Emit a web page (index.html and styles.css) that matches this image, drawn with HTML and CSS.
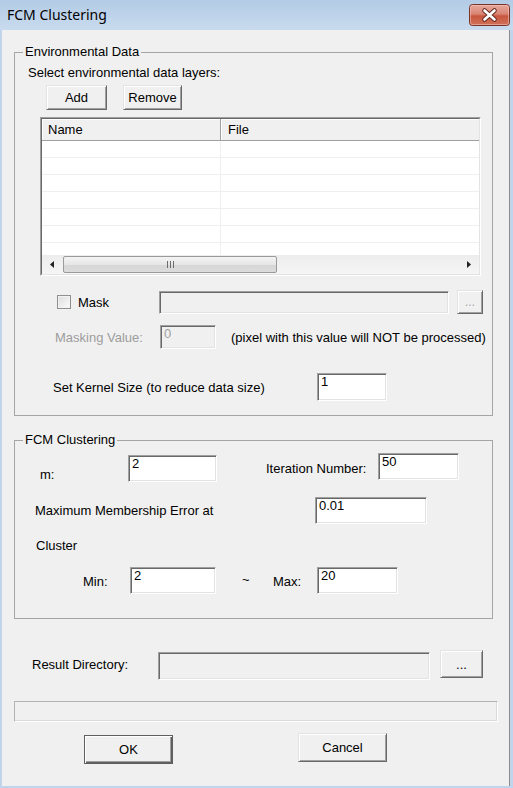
FILE: index.html
```html
<!DOCTYPE html>
<html>
<head>
<meta charset="utf-8">
<title>FCM Clustering</title>
<link rel="stylesheet" href="styles.css">
</head>
<body>
<div class="window">
  <div class="titlebar">
    <span class="title">FCM Clustering</span>
    <span class="close">
      <svg width="41" height="22" viewBox="0 0 41 22">
        <defs>
          <linearGradient id="cg" x1="0" y1="0" x2="0" y2="1">
            <stop offset="0" stop-color="#e8aa9e"/>
            <stop offset="0.45" stop-color="#d98574"/>
            <stop offset="0.55" stop-color="#c8563f"/>
            <stop offset="1" stop-color="#d0735a"/>
          </linearGradient>
        </defs>
        <rect x="0.5" y="0.5" width="40" height="21" rx="3" fill="url(#cg)" stroke="#7b3329"/>
        <rect x="1.5" y="1.5" width="38" height="19" rx="2" fill="none" stroke="#f3c6bc" stroke-opacity="0.55"/>
        <path d="M15.5 6.5 L25.5 15.5 M25.5 6.5 L15.5 15.5" stroke="#6a2a22" stroke-width="4.6" stroke-linecap="round"/>
        <path d="M15.5 6.5 L25.5 15.5 M25.5 6.5 L15.5 15.5" stroke="#ffffff" stroke-width="2.6" stroke-linecap="round"/>
      </svg>
    </span>
  </div>
  <div class="frame">
    <div class="client">

      <fieldset class="group g1">
        <legend>Environmental Data</legend>
        <div class="select">Select environmental data layers:</div>
        <div class="btnrow">
          <button class="btn add">Add</button>
          <button class="btn remove">Remove</button>
        </div>
        <div class="list">
          <div class="list-in">
            <div class="lv-head">
              <div class="hcell c1">Name</div>
              <div class="hcell c2">File</div>
            </div>
            <div class="lv-body">
              <div class="lv-row"><span class="cell1"></span><span class="cell2"></span></div>
              <div class="lv-row"><span class="cell1"></span><span class="cell2"></span></div>
              <div class="lv-row"><span class="cell1"></span><span class="cell2"></span></div>
              <div class="lv-row"><span class="cell1"></span><span class="cell2"></span></div>
              <div class="lv-row"><span class="cell1"></span><span class="cell2"></span></div>
              <div class="lv-row"><span class="cell1"></span><span class="cell2"></span></div>
              <div class="lv-row"><span class="cell1"></span><span class="cell2"></span></div>
            </div>
            <div class="hscroll">
              <div class="sb-arrow">
                <svg width="4" height="7" viewBox="0 0 4 7"><path d="M4 0 L0 3.5 L4 7 Z" fill="#222"/></svg>
              </div>
              <div class="thumb">
                <svg width="7" height="7" viewBox="0 0 7 7"><path d="M0.5 0 V7 M3.5 0 V7 M6.5 0 V7" stroke="#6b6b6b" stroke-width="1"/></svg>
              </div>
              <div class="sb-track"></div>
              <div class="sb-arrow">
                <svg width="4" height="7" viewBox="0 0 4 7"><path d="M0 0 L4 3.5 L0 7 Z" fill="#222"/></svg>
              </div>
            </div>
          </div>
        </div>

        <div class="mask">
          <span class="cb"></span>
          <span class="mask-lbl">Mask</span>
          <div class="field disabled mask-path"></div>
          <button class="btn dots dis">...</button>
        </div>

        <div class="mrow">
          <span class="mval-lbl">Masking Value:</span>
          <div class="field disabled mval">0</div>
          <span class="note">(pixel with this value will NOT be processed)</span>
        </div>

        <div class="krow">
          <span class="k-lbl">Set Kernel Size (to reduce data size)</span>
          <div class="field kval">1</div>
        </div>
      </fieldset>

      <fieldset class="group g2">
        <legend>FCM Clustering</legend>
        <div class="row1">
          <span class="m-lbl">m:</span>
          <div class="field m-box">2</div>
          <span class="it-lbl">Iteration Number:</span>
          <div class="field it-box">50</div>
        </div>
        <div class="row2">
          <span class="err-lbl">Maximum Membership Error at</span>
          <div class="field err-box">0.01</div>
        </div>
        <div class="cluster">Cluster</div>
        <div class="row3">
          <span class="min-lbl">Min:</span>
          <div class="field min-box">2</div>
          <span class="tilde">~</span>
          <span class="max-lbl">Max:</span>
          <div class="field max-box">20</div>
        </div>
      </fieldset>

      <div class="result">
        <span class="res-lbl">Result Directory:</span>
        <div class="field disabled res-box"></div>
        <button class="btn dots res-btn">...</button>
      </div>

      <div class="progress"></div>

      <div class="actions">
        <button class="btn default ok">OK</button>
        <button class="btn cancel">Cancel</button>
      </div>

    </div>
  </div>
</div>
</body>
</html>
```

FILE: styles.css
```css
html, body {
  margin: 0;
  padding: 0;
  background: #f0f0f0;
}

.window {
  width: 513px;
  height: 788px;
  display: flex;
  flex-direction: column;
  font-family: "Liberation Sans", Arial, sans-serif;
  font-size: 13px;
  color: #000;
  overflow: hidden;
}

/* ---------- title bar ---------- */
.titlebar {
  height: 30px;
  flex: none;
  display: flex;
  background: linear-gradient(#b3cbe6, #c8daee);
}
.title {
  font-family: "Noto Sans", "Open Sans", sans-serif;
  font-size: 14px;
  line-height: 30px;
  margin-left: 7px;
  color: #000;
}
.close {
  margin-left: auto;
  margin-right: 3px;
  margin-top: 4px;
  height: 22px;
}
.close svg { display: block; }

/* ---------- frame ---------- */
.frame {
  flex: 1;
  display: flex;
  border-left: 2px solid #c0d5ec;
  border-right: 3px solid #c0d5ec;
  border-bottom: 2px solid #c0d5ec;
}
.client {
  flex: 1;
  display: flex;
  flex-direction: column;
  background: #f0f0f0;
  border-right: 1px solid #8d8d8d;
}

/* ---------- common controls ---------- */
.btn {
  box-sizing: border-box;
  padding: 0;
  margin: 0;
  font-family: "Liberation Sans", Arial, sans-serif;
  font-size: 13px;
  color: #000;
  background: #f0f0f0;
  border: 1px solid;
  border-color: #e3e3e3 #696969 #696969 #e3e3e3;
  box-shadow: inset 1px 1px #ffffff, inset -1px -1px #a0a0a0;
  display: flex;
  align-items: center;
  justify-content: center;
  flex: none;
}
.btn.default {
  border-color: #5f5f5f;
  box-shadow: inset 1px 1px #ffffff, inset -1px -1px #5f5f5f, inset -2px -2px #a0a0a0;
}
.btn.dis {
  color: #a0a0a0;
  text-shadow: 1px 1px #ffffff;
}

.field {
  box-sizing: border-box;
  flex: none;
  background: #ffffff;
  border: 1px solid;
  border-color: #a0a0a0 #ffffff #ffffff #a0a0a0;
  box-shadow: inset 1px 1px #696969, inset -1px -1px #e3e3e3;
  padding: 1px 3px 0 3px;
  line-height: 14px;
  font-size: 13px;
}
.field.disabled {
  background: #f0f0f0;
  color: #a0a0a0;
}

/* ---------- group boxes ---------- */
.group {
  box-sizing: border-box;
  width: 479px;
  min-width: 0;
  margin: 0 0 0 12px;
  padding: 0;
  border: 1px solid #a5a5a5;
}
.group legend {
  margin-left: 8px;
  padding: 0 2px;
  font-size: 13px;
  line-height: 14px;
}
.g1 {
  margin-top: 15px;
  padding-bottom: 14px;
}
.g2 {
  margin-top: 17px;
  padding-bottom: 24px;
}

/* ---------- environmental data ---------- */
.select {
  padding: 6px 0 0 13px;
  line-height: 15px;
}
.btnrow {
  display: flex;
  margin: 5px 0 0 31px;
}
.add { width: 61px; height: 25px; }
.remove { width: 59px; height: 25px; margin-left: 16px; }

.list {
  box-sizing: border-box;
  width: 441px;
  height: 159px;
  margin: 7px 0 0 25px;
  border: 1px solid;
  border-color: #a0a0a0 #ffffff #ffffff #a0a0a0;
}
.list-in {
  box-sizing: border-box;
  height: 100%;
  display: flex;
  flex-direction: column;
  background: #ffffff;
  border: 1px solid;
  border-color: #696969 #e3e3e3 #e3e3e3 #696969;
}
.lv-head {
  flex: none;
  height: 22px;
  display: flex;
  box-sizing: border-box;
  background: #f0f0f0;
  border-bottom: 1px solid #a0a0a0;
}
.hcell {
  box-sizing: border-box;
  line-height: 21px;
  padding-left: 6px;
  box-shadow: inset 1px 1px #ffffff;
}
.c1 {
  width: 179px;
  border-right: 1px solid #a0a0a0;
}
.c2 {
  flex: 1;
  padding-left: 7px;
}
.lv-body {
  flex: 1;
  overflow: hidden;
}
.lv-row {
  display: flex;
  height: 17px;
  box-sizing: border-box;
  border-bottom: 1px solid #efefef;
}
.cell1 {
  width: 179px;
  box-sizing: border-box;
  border-right: 1px solid #efefef;
}
.cell2 { flex: 1; }

.hscroll {
  flex: none;
  height: 19px;
  display: flex;
  align-items: center;
  background: linear-gradient(#ededed, #f5f5f5);
}
.sb-arrow {
  width: 20px;
  height: 100%;
  display: flex;
  align-items: center;
  justify-content: center;
  flex: none;
}
.sb-arrow svg { display: block; }
.thumb {
  box-sizing: border-box;
  width: 214px;
  height: 17px;
  margin-left: 1px;
  border: 1px solid #9a9a9a;
  border-radius: 2px;
  background: linear-gradient(#f4f4f4, #e6e6e6 50%, #d6d6d6 52%, #dcdcdc);
  display: flex;
  align-items: center;
  justify-content: center;
  flex: none;
}
.thumb svg { display: block; }
.sb-track { flex: 1; }

.mask {
  display: flex;
  align-items: center;
  height: 24px;
  margin: 14px 0 0 42px;
}
.cb {
  box-sizing: border-box;
  width: 14px;
  height: 14px;
  flex: none;
  border: 1px solid #8e8f8f;
  background: linear-gradient(135deg, #dcdcdc, #fbfbfb);
  box-shadow: inset 0 0 0 1px #f2f2f2;
}
.mask-lbl {
  width: 81px;
  margin-left: 7px;
  flex: none;
}
.mask-path { width: 290px; height: 23px; }
.dots { width: 26px; height: 24px; margin-left: 8px; font-size: 12px; }

.mrow {
  display: flex;
  align-items: center;
  height: 24px;
  margin: 11px 0 0 40px;
}
.mval-lbl {
  width: 105px;
  flex: none;
  color: #9d9d9d;
}
.mval { width: 56px; height: 24px; }
.note { margin-left: 15px; white-space: nowrap; }

.krow {
  display: flex;
  align-items: center;
  height: 28px;
  margin: 24px 0 0 38px;
}
.k-lbl { width: 264px; flex: none; }
.kval { width: 70px; height: 28px; }

/* ---------- FCM clustering ---------- */
.row1 {
  display: flex;
  align-items: flex-start;
  margin: 6px 0 0 25px;
  line-height: 15px;
}
.m-lbl { width: 88px; margin-top: 14px; flex: none; }
.m-box { width: 89px; height: 27px; margin-top: 2px; }
.it-lbl { width: 112px; margin-left: 49px; margin-top: 8px; flex: none; }
.it-box { width: 81px; height: 27px; }

.row2 {
  display: flex;
  align-items: flex-start;
  margin: 15px 0 0 20px;
  line-height: 15px;
}
.err-lbl { width: 280px; margin-top: 6px; flex: none; }
.err-box { width: 112px; height: 27px; }

.cluster {
  margin: 14px 0 0 21px;
  line-height: 15px;
}

.row3 {
  display: flex;
  align-items: flex-start;
  margin: 14px 0 0 68px;
  line-height: 15px;
}
.min-lbl { width: 47px; margin-top: 7px; flex: none; }
.min-box { width: 86px; height: 27px; }
.tilde { width: 31px; margin-left: 26px; margin-top: 5px; flex: none; }
.max-lbl { width: 44px; margin-top: 7px; flex: none; }
.max-box { width: 81px; height: 27px; }

/* ---------- bottom ---------- */
.result {
  display: flex;
  align-items: flex-start;
  margin: 31px 0 0 30px;
  line-height: 15px;
}
.res-lbl { width: 126px; margin-top: 7px; flex: none; }
.res-box { width: 272px; height: 28px; margin-top: 2px; }
.res-btn { width: 43px; height: 28px; margin-left: 10px; font-size: 13px; }

.progress {
  box-sizing: border-box;
  width: 484px;
  height: 21px;
  margin: 21px 0 0 12px;
  background: #f0f0f0;
  border: 1px solid;
  border-color: #b4b4b4 #ffffff #ffffff #b4b4b4;
  box-shadow: inset -1px -1px #dadada;
}

.actions {
  display: flex;
  align-items: flex-start;
  margin: 11px 0 0 82px;
}
.ok { width: 89px; height: 29px; margin-top: 2px; }
.cancel { width: 89px; height: 29px; margin-left: 125px; }
```
